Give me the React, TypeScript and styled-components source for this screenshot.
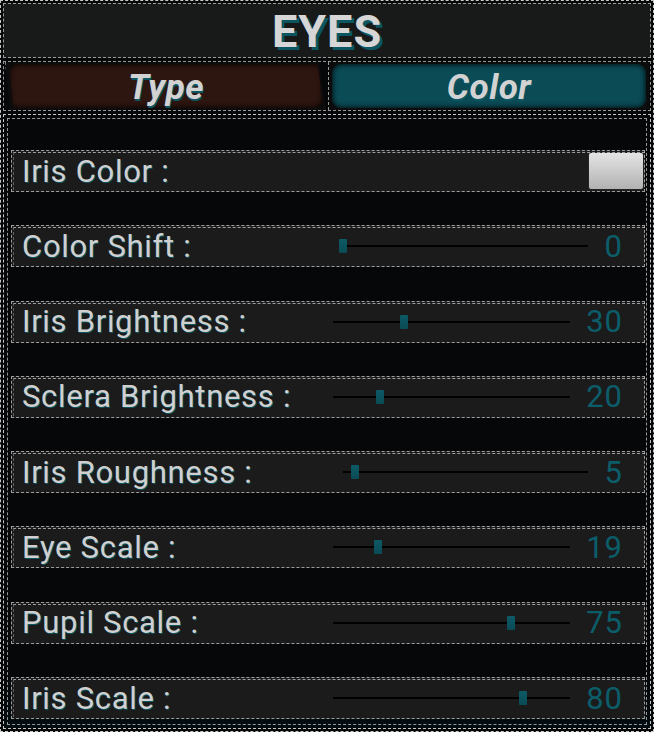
import React, {ReactElement} from 'react';
import styled, {createGlobalStyle} from 'styled-components';

const colors = {
    page: '#050709',
    panel: '#181a1a',
    row: '#1b1b1b',
    text: '#d0d0d0',
    shadow: '#0c5662',
    teal: '#0b5d6a',
    handle: '#0a4b55',
    dash: 'rgba(200, 200, 200, 0.75)',
    dashBright: 'rgba(235, 235, 235, 0.85)',
};

type Setting =
    | {kind: 'color'; label: string}
    | {kind: 'slider'; label: string; value: number; wide?: boolean};

const settings: Setting[] = [
    {kind: 'color', label: 'Iris Color :'},
    {kind: 'slider', label: 'Color Shift :', value: 0, wide: true},
    {kind: 'slider', label: 'Iris Brightness :', value: 30},
    {kind: 'slider', label: 'Sclera Brightness :', value: 20},
    {kind: 'slider', label: 'Iris Roughness :', value: 5, wide: true},
    {kind: 'slider', label: 'Eye Scale :', value: 19},
    {kind: 'slider', label: 'Pupil Scale :', value: 75},
    {kind: 'slider', label: 'Iris Scale :', value: 80},
];

export default function App(): ReactElement {
    return (
        <>
            <GlobalStyle />
            <Window>
                <Header>EYES</Header>
                <TabBar>
                    <Tab $variant="type">
                        <TabFill $variant="type">Type</TabFill>
                    </Tab>
                    <Tab $variant="color">
                        <TabFill $variant="color">Color</TabFill>
                    </Tab>
                </TabBar>
                <Panel>
                    {settings.map((s) => (
                        <Row key={s.label} $wide={s.kind === 'slider' && !!s.wide} $swatch={s.kind === 'color'}>
                            <Label>{s.label}</Label>
                            {s.kind === 'color' ? (
                                <Swatch />
                            ) : (
                                <>
                                    <Track>
                                        <Handle style={{left: `${s.value}%`}} />
                                    </Track>
                                    <Value>{s.value}</Value>
                                </>
                            )}
                        </Row>
                    ))}
                </Panel>
            </Window>
        </>
    );
}

const GlobalStyle = createGlobalStyle`
    html, body {
        margin: 0;
        padding: 0;
        background: ${colors.page};
    }
    * {
        box-sizing: border-box;
    }
`;

const Window = styled.div`
    width: 654px;
    height: 732px;
    background: ${colors.page};
    border: 1px dashed ${colors.dashBright};
    padding: 2px;
    display: flex;
    flex-flow: column nowrap;
    gap: 3px;
    font-family: Roboto, 'Liberation Sans', sans-serif;
    overflow: hidden;
`;

const Header = styled.div`
    height: 55px;
    flex: none;
    background: ${colors.panel};
    border: 1px dashed ${colors.dash};
    display: flex;
    align-items: center;
    justify-content: center;
    font-size: 45px;
    font-weight: 700;
    letter-spacing: 1px;
    color: #d6d6d6;
    text-shadow: 3px 3px 0 ${colors.shadow};
    line-height: 1;
    padding-top: 2px;
`;

const TabBar = styled.div`
    height: 50px;
    flex: none;
    border: 1px dashed ${colors.dash};
    display: flex;
    padding: 0 1px;
    gap: 2px;
`;

const Tab = styled.div<{$variant: 'type' | 'color'}>`
    flex: 1;
    display: flex;
    padding: 2px 3px;
    background: #0c0c0c;
    border-left: 1px dashed ${colors.dash};
    clip-path: ${({$variant}): string =>
        $variant === 'type'
            ? 'polygon(0 0, calc(100% - 7px) 0, 100% 100%, 5px 100%)'
            : 'none'};
`;

const TabFill = styled.div<{$variant: 'type' | 'color'}>`
    flex: 1;
    display: flex;
    align-items: center;
    justify-content: center;
    border-radius: 9px;
    background: ${({$variant}): string => ($variant === 'type' ? '#2d1510' : '#0a4b55')};
    box-shadow: inset 0 0 5px 1px rgba(0, 0, 0, 0.8);
    clip-path: ${({$variant}): string =>
        $variant === 'type'
            ? 'polygon(0 0, calc(100% - 5px) 0, 100% 100%, 4px 100%)'
            : 'none'};
    font-size: 35px;
    font-weight: 700;
    font-style: italic;
    letter-spacing: 0.5px;
    color: #d2d2d2;
    text-shadow: 1px 2px 0 ${colors.shadow};
    padding-top: 2px;
`;

const Panel = styled.div`
    flex: 1;
    position: relative;
    border: 1px dashed ${colors.dashBright};
    padding: 35px 5px 8px 7px;
    display: flex;
    flex-flow: column nowrap;
    gap: 33.3px;
    background: linear-gradient(to bottom, ${colors.page} 92%, #020c10);

    &::before {
        content: '';
        position: absolute;
        inset: 3px;
        border: 1px dashed ${colors.dash};
        pointer-events: none;
    }
`;

const Row = styled.div<{$wide: boolean; $swatch: boolean}>`
    position: relative;
    height: 42px;
    flex: none;
    background: ${colors.row};
    border: 1px dashed ${colors.dash};
    display: grid;
    align-items: center;
    grid-template-columns: ${({$wide, $swatch}): string =>
        $swatch ? '1fr 54px' : $wide ? '1fr 245px 34px' : '1fr 237px 52px'};
    padding: 0 ${({$swatch}): string => ($swatch ? '1px' : '22px')} 0 10px;

    &::before {
        content: '';
        position: absolute;
        inset: 1px -1px 1px 1px;
        border-top: 1px dashed ${colors.dash};
        border-left: 1px dashed rgba(200, 200, 200, 0.4);
        pointer-events: none;
    }
`;

const Label = styled.span`
    font-size: 31px;
    letter-spacing: 0.7px;
    color: ${colors.text};
    text-shadow: 1px 1px 0 ${colors.shadow};
    white-space: nowrap;
    line-height: 1;
`;

const Track = styled.div`
    position: relative;
    height: 2px;
    background: #000;
`;

const Handle = styled.div`
    position: absolute;
    top: -6px;
    width: 8px;
    height: 14px;
    margin-left: -4px;
    border-radius: 1px;
    background: linear-gradient(to bottom, #0d5a66, ${colors.handle});
`;

const Value = styled.span`
    text-align: right;
    font-size: 31px;
    letter-spacing: 1px;
    margin-right: -1px;
    color: ${colors.teal};
    line-height: 1;
`;

const Swatch = styled.div`
    height: 36px;
    border-radius: 2px;
    background: linear-gradient(to bottom, #e4e4e4, #b2b2b2);
    box-shadow: 0 0 1px rgba(255, 255, 255, 0.4);
`;
